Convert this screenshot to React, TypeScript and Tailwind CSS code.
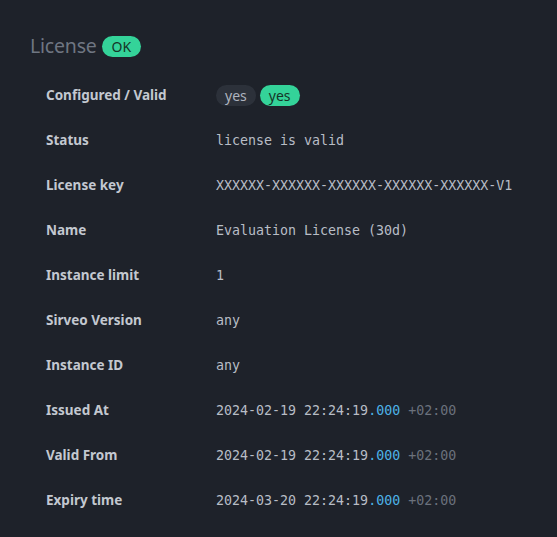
import React from 'react'

type Row = { label: string; value: React.ReactNode }

const Stamp = ({ date }: { date: string }) => (
  <span>
    {date} 22:24:19<span className="text-[#4db2e6]">.000</span>{' '}
    <span className="text-[#6b717c]">+02:00</span>
  </span>
)

const ROWS: Row[] = [
  {
    label: 'Configured / Valid',
    value: (
      <div className="flex items-center gap-[4px] font-['Noto_Sans',sans-serif] text-[14px]">
        <span className="px-[9px] h-[21px] leading-[21px] rounded-full bg-[#2c313a] text-[#aeb4be]">yes</span>
        <span className="px-[9px] h-[21px] leading-[21px] rounded-full bg-[#34d399] text-[#163528]">yes</span>
      </div>
    ),
  },
  { label: 'Status', value: 'license is valid' },
  { label: 'License key', value: 'XXXXXX-XXXXXX-XXXXXX-XXXXXX-XXXXXX-V1' },
  { label: 'Name', value: 'Evaluation License (30d)' },
  { label: 'Instance limit', value: '1' },
  { label: 'Sirveo Version', value: 'any' },
  { label: 'Instance ID', value: 'any' },
  { label: 'Issued At', value: <Stamp date="2024-02-19" /> },
  { label: 'Valid From', value: <Stamp date="2024-02-19" /> },
  { label: 'Expiry time', value: <Stamp date="2024-03-20" /> },
]

export default function App() {
  return (
    <div className="min-h-screen bg-[#1e222a] pt-[34px] pl-[30px] font-['Noto_Sans',sans-serif]">
      <div className="flex items-center gap-[5px] h-[24px]">
        <h2 className="text-[19.5px] leading-none text-[#6f7682] tracking-[-0.2px]">License</h2>
        <span className="px-[10px] h-[21px] leading-[21px] rounded-full bg-[#34d399] text-[#163528] text-[14px]">OK</span>
      </div>

      <div className="mt-[15px] pl-[16px] flex flex-col">
        {ROWS.map(row => (
          <div key={row.label} className="flex items-center h-[45px]">
            <div className="w-[170px] flex-shrink-0 text-[13.5px] font-bold text-[#c3c8d0]">{row.label}</div>
            <div className="font-['DejaVu_Sans_Mono',monospace] text-[13.3px] text-[#b8bdc6]">
              {row.value}
            </div>
          </div>
        ))}
      </div>
    </div>
  )
}
